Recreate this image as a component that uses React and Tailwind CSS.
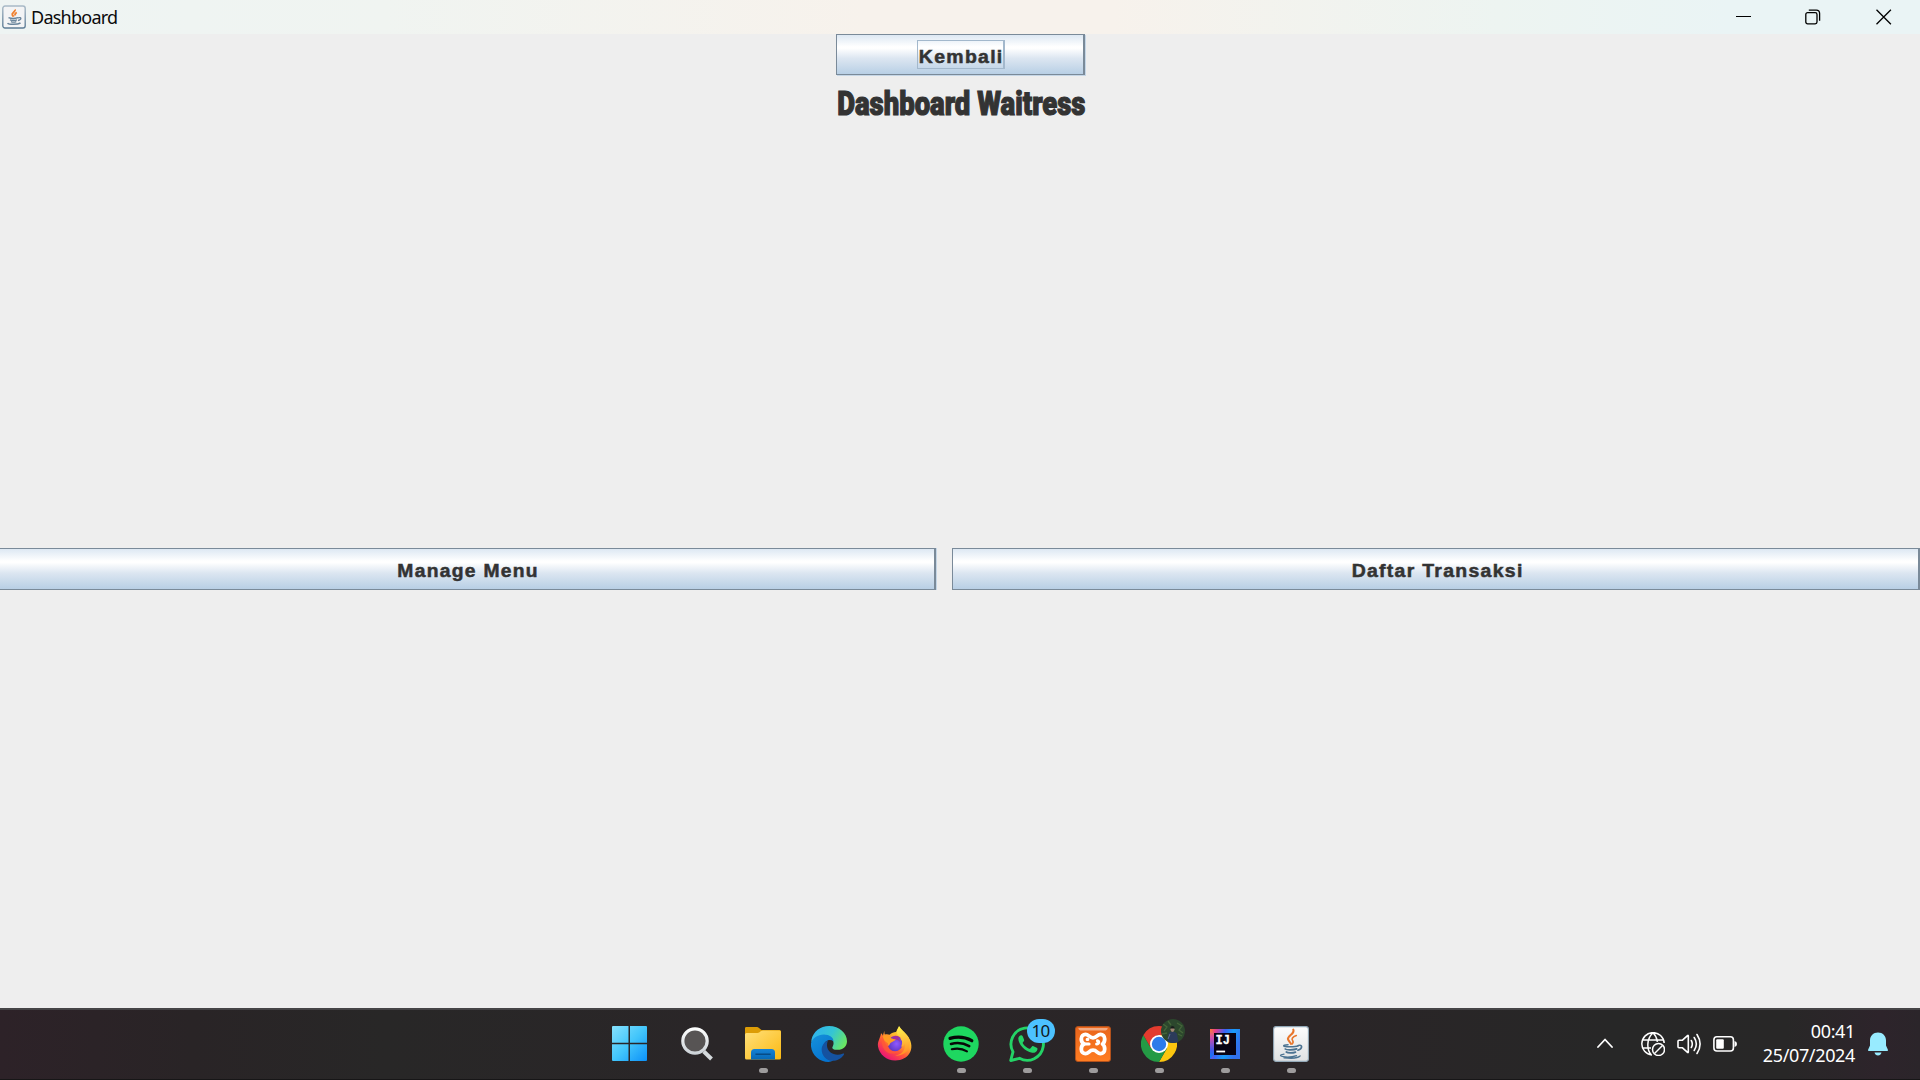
import React from "react";

function JavaIcon({ className }) {
  return (
    <svg viewBox="0 0 36 36" className={className}>
      <defs>
        <linearGradient id="javaBg" x1="0" y1="0" x2="0" y2="1">
          <stop offset="0" stopColor="#fdfdfd" />
          <stop offset="1" stopColor="#dfe1e2" />
        </linearGradient>
      </defs>
      <rect x="0.6" y="0.6" width="34.8" height="34.8" rx="2.6" fill="url(#javaBg)" stroke="#93a9b8" strokeWidth="1.1" />
      <g fill="none" stroke="#e8762c" strokeLinecap="round">
        <path d="M20.3 3.6c2 4.2-6.300 6.200-5.300 9.700.4 1.700 2.300 2.900 3 4.500" strokeWidth="2.1" />
        <path d="M23.300 9.500c-4 1.500-5 3.300-3.700 5 .9 1.300.5 2.500-.4 3.400" strokeWidth="1.6" />
      </g>
      <g fill="none" stroke="#4c7391" strokeLinecap="round">
        <path d="M15 18.800c-3.200.1-4.600.7-4.200 1.200.9 1.100 11.500 1 14.400-.3" strokeWidth="1.500" />
        <path d="M12.200 23c1.200 1.200 8.800 1 11.500-.1" strokeWidth="1.700" />
        <path d="M13.300 26c1.500 1.300 6.800 1.100 9.200.1" strokeWidth="1.700" />
        <path d="M25.300 19.500c4.200-1.300 4.800 2.800-.4 4.700" strokeWidth="1.600" />
        <path d="M11 28.200c-10 1.700 3.500 4.500 12.500 1.400M11 31.800c7.500.9 14.500 0 16.200-1.900" strokeWidth="1.300" />
      </g>
    </svg>
  );
}

function JavaSmallIcon() {
  return (
    <svg viewBox="0 0 24 24" className="h-6 w-6">
      <defs>
        <linearGradient id="javaSmBorder" x1="0" y1="0" x2="0" y2="1">
          <stop offset="0" stopColor="#a9bac7" />
          <stop offset="1" stopColor="#5d7c95" />
        </linearGradient>
      </defs>
      <rect x="0.8" y="1" width="22.400" height="22" rx="2.200" fill="#f3f4f5" stroke="url(#javaSmBorder)" strokeWidth="1.400" />
      <path d="M13 4.500c1 2.200-3.800 3.200-2.700 5.300.4.800 1 1 1.200 2M14.800 7.500c-2.500 1.200-1.800 2-1.500 3" fill="none" stroke="#ef8030" strokeWidth="1.900" />
      <path d="M6.500 12.700c2.500.9 7 .8 9.500 0M8 14.800c2 .7 5.200.7 7 0M9 16.600c1.500.7 3.700.7 5.300 0M16 12.800c4-1 3.600 2 0 2.700" fill="none" stroke="#68849b" strokeWidth="1.300" />
      <path d="M5.500 18.200c1.500 1.500 10 1.500 13-.2" fill="none" stroke="#68849b" strokeWidth="1.600" />
    </svg>
  );
}

function WindowsIcon() {
  return (
    <svg viewBox="0 0 36 36" className="relative -left-px h-9 w-9">
      <defs>
        <linearGradient id="win" gradientUnits="userSpaceOnUse" x1="0" y1="0" x2="35" y2="35">
          <stop offset="0" stopColor="#86e2fd" />
          <stop offset="0.5" stopColor="#43c6fb" />
          <stop offset="1" stopColor="#0c91f8" />
        </linearGradient>
      </defs>
      <g fill="url(#win)">
        <path d="M1 0h15.500v16.800H0V1Q0 0 1 0Z" />
        <path d="M18 0h16q1 0 1 1v15.800H18Z" />
        <path d="M0 18.300h16.500V35H1q-1 0-1-1Z" />
        <path d="M18 18.300h17V34q0 1-1 1H18Z" />
      </g>
    </svg>
  );
}

function SearchIcon() {
  return (
    <svg viewBox="0 0 36 36" className="h-9 w-9">
      <defs>
        <linearGradient id="lens" x1="0" y1="0" x2="0" y2="1">
          <stop offset="0" stopColor="#fdfefe" />
          <stop offset="1" stopColor="#cdd3d8" />
        </linearGradient>
      </defs>
      <path d="m24.800 25.500 7.700 7.500" stroke="#d5dadd" strokeWidth="4" strokeLinecap="butt" />
      <circle cx="16" cy="15" r="12.200" fill="#575454" stroke="url(#lens)" strokeWidth="3.200" />
    </svg>
  );
}

function FolderIcon() {
  return (
    <svg viewBox="0 0 36 36" className="h-9 w-9">
      <defs>
        <linearGradient id="folder" x1="0" y1="0" x2="1" y2="1">
          <stop offset="0" stopColor="#ffe07b" />
          <stop offset="1" stopColor="#fbb912" />
        </linearGradient>
        <linearGradient id="folderBlue" x1="0" y1="0" x2="0" y2="1">
          <stop offset="0" stopColor="#1482d6" />
          <stop offset="1" stopColor="#0768b4" />
        </linearGradient>
      </defs>
      <path d="M0 2.300Q0 1 1.300 1H12q1 0 2 .9L16.500 4H34.500Q36 4 36 5.500V10H0Z" fill="#dc9c06" />
      <path d="M0 8.500Q0 7 1.500 7H12.500q1 0 2-.8l1.500-1.100q.8-.6 2-.6H34.500Q36 4.500 36 6V32q0 1.500-1.500 1.500h-33Q0 33.500 0 32Z" fill="url(#folder)" />
      <path d="M6 26.500Q6 23 9.500 23h17Q30 23 30 26.500v7H6Z" fill="url(#folderBlue)" />
      <path d="M11 28.200h14" stroke="#064b85" strokeWidth="1.500" strokeLinecap="round" />
    </svg>
  );
}

function EdgeIcon() {
  return (
    <svg viewBox="0 0 24 24" className="h-9 w-9">
      <defs>
        <linearGradient id="edgeTop" x1="0" y1="0.300" x2="1" y2="0.700">
          <stop offset="0" stopColor="#2fb2ee" />
          <stop offset="0.500" stopColor="#35c5d3" />
          <stop offset="1" stopColor="#6de95d" />
        </linearGradient>
        <linearGradient id="edgeLeft" x1="0" y1="0" x2="0.600" y2="1">
          <stop offset="0" stopColor="#1691d9" />
          <stop offset="1" stopColor="#0573d0" />
        </linearGradient>
      </defs>
      <path d="M.3 9.200C1.500 3.700 6.200 0 12 0c7 0 12 4.900 12 10.200 0 3.400-2.700 5.700-6.200 5.700-2.700 0-4.200-.8-3.400-2.100 1.900-3-.3-6.600-4.900-6.600-4 0-7.200 1.700-9.200 3.800Z" fill="url(#edgeTop)" />
      <path d="M0 11.500C.8 8 4.500 5.600 8.600 5.600c3.800 0 6.400 2 6.400 4.500-2.600-2-6.300-.3-6.800 3.800-.5 4.300 2.800 7.700 6.700 9C13.800 23.800 12.500 24 11.700 24 5.200 24-.6 18.500 0 11.500Z" fill="url(#edgeLeft)" />
      <path d="M11.300 9.700c-4.800 2.200-5.300 7.500-2.400 10.900 3.500 4.200 9.900 3.100 12.900-1.300.6-.9.200-1.300-.8-.8-5.300 2.300-12.600-1.700-9.700-8.800Z" fill="#1552a0" />
    </svg>
  );
}

function FirefoxIcon() {
  return (
    <svg viewBox="0 0 36 36" className="h-9 w-9">
      <defs>
        <linearGradient id="ffBody" x1="0.900" y1="0.100" x2="0.300" y2="1">
          <stop offset="0" stopColor="#fff24b" />
          <stop offset="0.350" stopColor="#ffb52b" />
          <stop offset="0.650" stopColor="#ff5639" />
          <stop offset="1" stopColor="#e8117a" />
        </linearGradient>
        <radialGradient id="ffGlobe" cx="0.600" cy="0.500" r="0.600">
          <stop offset="0" stopColor="#9059ff" />
          <stop offset="1" stopColor="#5a35bd" />
        </radialGradient>
        <linearGradient id="ffTail" x1="0.300" y1="0" x2="0.400" y2="1">
          <stop offset="0" stopColor="#fff44f" />
          <stop offset="1" stopColor="#ff8b24" />
        </linearGradient>
      </defs>
      <path d="M7.300 5c.2 1.500 0 2.500.6 3.500 1.800-.5 3.500-.2 4.700.3C14.500 7 16.800 6 19 6L22 0c1.800 3 5 5.600 7.500 8.500 4.600 5.200 6.300 12 3.700 17.500-2.700 5.600-8.400 8.500-15 8.500C9.500 34.500 2.400 28.500 1 20.500.3 15.200 3.500 12 4 7.300c1 .6 1.500 1.500 1.800 2.500Z" fill="url(#ffBody)" />
      <circle cx="18" cy="17.800" r="7.500" fill="url(#ffGlobe)" />
      <path d="M22.500.5c-3 3-3.500 7-.6 9.600 3.300 2.800 4.300 7.500 2 10.700 2.200-.4 3.600-2 4-3.500 1.500 6.800-4.300 12.300-10 12.300 10 1.200 17-7.500 14.500-16.100-1.500-5.500-7.900-7.500-9.900-13Z" fill="url(#ffTail)" />
      <path d="M7.900 9c3 0 5 .6 6.300 3.200 1.400.7 3.300.4 4.800.8-.5 1.900-3.500 2.500-5.300 3.800-1 .8-.5 2.200-2.700 3.200C7.500 18 7 13.500 5.500 10.500Z" fill="#ff9b22" />
      <path d="M5.500 9.500c1 4.300 1.900 5.500 5.500 8-.5 6.500 6 10 11 7.200-2.500 3.600-10.600 4.500-14.500-1C4.700 19.800 3.900 14 5.500 9.500Z" fill="#ff5b35" fillOpacity="0.750" />
      <path d="M15 11.200c3-2.700 6.800-1.700 9.300 1.300-1.300-.4-2.300-.3-3-.1 1 .9 1.700 2.200 1.800 3.500-1.600-2.200-4.700-2.900-7-3Z" fill="#a32fa0" />
    </svg>
  );
}

function SpotifyIcon() {
  return (
    <svg viewBox="0 0 36 36" className="h-9 w-9">
      <circle cx="18" cy="18" r="17.700" fill="#1ed760" />
      <g fill="none" stroke="#080808" strokeLinecap="round">
        <path d="M7 12.400c7.300-2 15.500-1.200 21.800 2.300" strokeWidth="3.200" />
        <path d="M8 18c6.100-1.700 12.800-.9 18.200 2.200" strokeWidth="2.600" />
        <path d="M8.800 23.300c5.200-1.300 10.800-.6 15.200 2" strokeWidth="2.100" />
      </g>
    </svg>
  );
}

function WhatsAppIcon() {
  return (
    <div className="relative h-9 w-9">
      <svg viewBox="0 0 36 36" className="h-9 w-9">
        <path d="M1.700 34.500 4 25.900A16.200 16.200 0 1 1 10.400 32.300Z" fill="#2a2628" stroke="#24d366" strokeWidth="2.900" strokeLinejoin="round" />
        <path d="M9.300 12.500c.1-1.600 1.700-3.500 3.200-3.200.7.100 1 .6 1.300 1.300l1.200 3c.4 1-.1 1.500-.6 2.200-.7.800-.9 1.100-.5 1.700 1.500 2.400 3.600 4.200 6.200 5.200.6.200 1 .1 1.400-.4l1.500-1.800c.4-.5.9-.6 1.500-.3l3.200 1.500c.8.4.9.8.7 1.700-.5 2.300-3 3.700-5.200 3.300C15.600 25.300 9.400 18.500 9.300 12.500Z" fill="#24d366" />
      </svg>
      <div className="absolute -top-[7px] left-[18px] flex h-6 w-7 items-center justify-center rounded-full bg-[#4cc2ff] pb-px pr-px text-[17px] leading-none tracking-[-0.8px] text-[#101820]">
        10
      </div>
    </div>
  );
}

function XamppIcon() {
  return (
    <svg viewBox="0 0 36 36" className="h-9 w-9">
      <defs>
        <linearGradient id="xampp" x1="0" y1="0" x2="0" y2="1">
          <stop offset="0" stopColor="#e9651c" />
          <stop offset="1" stopColor="#ff7d22" />
        </linearGradient>
      </defs>
      <rect x="0.500" y="0.500" width="35" height="35" rx="2.500" fill="url(#xampp)" stroke="#b2511c" />
      <path d="M4 2h28c1.500 0 .2 2.500-2 2.500H6C4 4.500 2.500 2 4 2Z" fill="#fff" fillOpacity="0.450" />
      <path d="M9 18c-2-1-2.700-3-2.700-5C6.300 10 8.200 8.300 10.500 8.300c3.300 0 3.500 3.500 7.500 3.500s4.200-3.500 7.500-3.500c2.300 0 4.200 1.700 4.200 4.700 0 2-.7 4-2.200 5 1.500 1 2.200 3 2.200 5 0 3-1.900 4.700-4.200 4.700-3.300 0-3.500-3.500-7.500-3.500s-4.200 3.500-7.500 3.500c-2.300 0-4.200-1.700-4.200-4.700 0-2 .7-4 2.700-5Z" fill="none" stroke="#fff" strokeWidth="3.800" strokeLinejoin="round" />
      <path d="M9 18h5M12.200 13.400h.6M22.500 14.800c1.600.2 1.600 3-.8 3.200" fill="none" stroke="#fff" strokeWidth="3.200" strokeLinecap="round" />
    </svg>
  );
}

function ChromeIcon() {
  return (
    <div className="relative h-9 w-9">
      <svg viewBox="0 0 36 36" className="h-9 w-9">
        <path d="M18 18V9H33.600A18 18 0 0 1 18 36l7.800-13.500Z" fill="#fcc60f" />
        <path d="M18 18l7.800 4.500L18 36A18 18 0 0 1 2.400 9l7.800 13.500Z" fill="#249a45" />
        <path d="M2.400 9A18 18 0 0 1 18 0a18 18 0 0 1 15.600 9H18Q12 9 10.200 22.500Z" fill="#e33b2e" />
        <circle cx="18" cy="18" r="9" fill="#fff" />
        <circle cx="18" cy="18" r="7.200" fill="#2d7bea" />
      </svg>
      <svg viewBox="0 0 24 24" className="absolute -top-[7px] left-5 h-6 w-6">
        <defs>
          <clipPath id="avatar">
            <circle cx="12" cy="12" r="12" />
          </clipPath>
        </defs>
        <g clipPath="url(#avatar)">
          <path d="M0 0h24v24H0Z" fill="#2c472d" />
          <path d="M2 5l4 3-3 4M16 4l5 3-3 4 4 3M7 2l3 4M17 15l4 2M1 15l5-1" stroke="#446539" strokeWidth="1.300" fill="none" />
          <path d="M6.500 24l1-9q.5-2.500 4-2.500t4.500 2.500l1.500 9Z" fill="#2b3b5a" />
          <path d="M7 20l2-5" stroke="#60728c" />
          <ellipse cx="11.500" cy="10.300" rx="2" ry="2.600" fill="#a08572" />
          <path d="M9.300 9.500q0-2.500 2.200-2.500t2.200 2.500Z" fill="#191d1b" />
        </g>
      </svg>
    </div>
  );
}

function IntelliJIcon() {
  return (
    <svg viewBox="0 0 36 36" className="h-9 w-9">
      <defs>
        <linearGradient id="ijBg" x1="0" y1="0" x2="1" y2="0.400">
          <stop offset="0" stopColor="#fc7b39" />
          <stop offset="0.180" stopColor="#e43e8e" />
          <stop offset="0.450" stopColor="#3a62f5" />
          <stop offset="0.700" stopColor="#179cf9" />
          <stop offset="1" stopColor="#3170ee" />
        </linearGradient>
        <linearGradient id="ijSide" x1="0" y1="0" x2="0" y2="1">
          <stop offset="0" stopColor="#fb7b35" />
          <stop offset="0.300" stopColor="#cf4cae" />
          <stop offset="0.700" stopColor="#4059e9" />
          <stop offset="1" stopColor="#087cfa" />
        </linearGradient>
      </defs>
      <path d="M3 3h30v30H3Z" fill="url(#ijBg)" />
      <path d="M3 3l4 4v22l-4 4Z" fill="url(#ijSide)" />
      <path d="M7 7h22v22H7Z" fill="#080314" />
      <text x="8.600" y="17.700" fill="#fff" stroke="#fff" strokeWidth="0.300" fontSize="12" fontWeight="700" fontFamily="'Liberation Mono', monospace">
        IJ
      </text>
      <path d="M9.300 25.500h8.800" stroke="#fff" strokeWidth="1.800" />
    </svg>
  );
}

const apps = [
  { name: "Start", icon: <WindowsIcon /> },
  { name: "Search", icon: <SearchIcon /> },
  { name: "File Explorer", icon: <FolderIcon />, running: true },
  { name: "Edge", icon: <EdgeIcon /> },
  { name: "Firefox", icon: <FirefoxIcon /> },
  { name: "Spotify", icon: <SpotifyIcon />, running: true },
  { name: "WhatsApp", icon: <WhatsAppIcon />, running: true },
  { name: "XAMPP", icon: <XamppIcon />, running: true },
  { name: "Chrome", icon: <ChromeIcon />, running: true },
  { name: "IntelliJ IDEA", icon: <IntelliJIcon />, running: true },
  { name: "Java", icon: <JavaIcon className="h-9 w-9" />, running: true },
];

function TitleBar() {
  return (
    <header className="flex h-[34px] shrink-0 items-center bg-[linear-gradient(90deg,#eef4f3_0%,#f0f4f1_20%,#f7f2ec_45%,#f7f2ec_58%,#edf4f1_78%,#eaf4f5_90%,#eaf4f5_100%)] pl-[2px] text-[#0b0b0b]">
      <JavaSmallIcon />
      <span className="ml-[5px] text-[18px] leading-6 tracking-[-0.75px]">Dashboard</span>
      <div className="ml-auto flex items-center">
        <svg viewBox="0 0 16 16" className="mr-[53px] h-4 w-4" fill="none" stroke="#000" strokeWidth="1">
          <path d="M0 7.500h15" />
        </svg>
        <svg viewBox="0 0 16 16" className="mr-[55px] h-4 w-4" fill="none" stroke="#000" strokeWidth="1.300">
          <rect x="0.800" y="3.600" width="11.200" height="11.200" rx="1.800" />
          <path d="M3.800 1.100h7.500a3.300 3.300 0 0 1 3.300 3.300v7.400" />
        </svg>
        <svg viewBox="0 0 16 16" className="mr-[28px] h-4 w-4" fill="none" stroke="#000" strokeWidth="1.300">
          <path d="m.5.800 14.400 14.400M14.900.800.5 15.200" />
        </svg>
      </div>
    </header>
  );
}

const buttonBase =
  "flex items-center justify-center border border-r-2 border-[#7a8a99] bg-[linear-gradient(180deg,#dde8f3_0%,#ffffff_30%,#ffffff_34%,#dce6f1_60%,#b8cfe5_100%)] font-['Liberation_Sans',Arial,sans-serif] text-[18px] font-bold leading-5 text-[#333333] [-webkit-text-stroke:0.5px_#333333]";

function TaskBar() {
  return (
    <footer className="flex h-[72px] shrink-0 items-stretch border-b border-t-2 border-b-[#171617] border-t-[#454446] bg-[linear-gradient(90deg,#2d2228_0%,#292426_10%,#282727_20%,#2a2628_38%,#2a2527_68%,#272727_84%,#282727_93%,#2d242b_98%,#2b252a_100%)] text-white">
      <nav className="ml-[598px] flex">
        {apps.map((app) => (
          <button key={app.name} className="flex w-[66px] flex-col items-center pt-[16px]">
            {app.icon}
            {app.running && <span className="mt-[6px] h-[5px] w-[9px] rounded-full bg-[#9e9c9d]" />}
          </button>
        ))}
      </nav>
      <div className="ml-auto flex items-center">
        <svg viewBox="0 0 16 10" className="mr-[28px] mt-[-4px] h-[10px] w-4" fill="none" stroke="#fff" strokeWidth="1.800" strokeLinecap="round" strokeLinejoin="round">
          <path d="m1 9 7-7.500L15 9" />
        </svg>
        <svg viewBox="0 0 24 24" className="-mt-px mr-3 h-6 w-6" fill="none" stroke="#fff" strokeWidth="1.500">
          <path d="M11 23A11.200 11.200 0 1 1 23.200 11M1.500 8h21M1.500 16H10M10 22.500C5.500 17 5.500 7 12 .8c2.700 2.600 4 6 4.400 9" />
          <circle cx="17.500" cy="17.500" r="6" />
          <path d="m13.500 21.500 8-8" />
        </svg>
        <svg viewBox="0 0 24 24" className="mr-3 mt-[-2px] h-6 w-6" fill="none" stroke="#fff" strokeWidth="1.600" strokeLinecap="round" strokeLinejoin="round">
          <path d="M1 9.200q0-1 1-1h3.500l5-4.600q.8-.6.8.4v16q0 1-.8.4l-5-4.600H2q-1 0-1-1Z" />
          <path d="M14.300 8.500q2 3.500 0 7M17.200 5.500q4.300 6.500 0 13M20 2.500q6.200 9.500 0 19" />
        </svg>
        <svg viewBox="0 0 24 24" className="mr-[24px] mt-[-2px] h-6 w-6">
          <rect x="0.900" y="4.800" width="19.500" height="14.200" rx="3" fill="none" stroke="#fff" strokeWidth="1.600" />
          <rect x="3.200" y="7.200" width="7.600" height="9.500" rx="1" fill="#fff" />
          <path d="M21.500 9q2.500.3 2.500 3t-2.500 3Z" fill="#fff" />
        </svg>
        <div className="mt-[-4px] w-[94px] whitespace-nowrap text-right text-[18px] leading-6 tracking-[-0.35px]">
          <div>00:41</div>
          <div>25/07/2024</div>
        </div>
        <svg viewBox="0 0 20 24" className="ml-[13px] mr-8 mt-[-2px] h-6 w-5" fill="#98ebff">
          <path d="M10 .5c4.700 0 8 3.500 8 8v5l1.800 4q.5 1.500-1 1.500H1.200q-1.500 0-1-1.500L2 13.500v-5c0-4.500 3.300-8 8-8Z" />
          <path d="M6.500 20.500h7q-.8 3-3.500 3t-3.500-3Z" />
        </svg>
      </div>
    </footer>
  );
}

export default function App() {
  return (
    <div className="flex h-[1080px] w-[1920px] flex-col overflow-hidden bg-[#eeeeee] font-['Noto_Sans','Open_Sans',sans-serif]">
      <TitleBar />
      <main className="flex flex-1 flex-col">
        <div className="flex flex-col items-center">
          <button className={`${buttonBase} h-[41px] w-[249px] pl-[2px] shadow-[1px_1px_0_#c5d6e6]`}>
            <span className="flex h-[29px] w-[88px] items-center justify-center border border-r-2 border-[#a3b8cc] pl-[2px] pt-[5px] tracking-[1.2px]">
              <span className="block scale-x-[1.080]">Kembali</span>
            </span>
          </button>
          <h1 className="mt-2 flex h-[42px] items-center justify-center whitespace-nowrap pl-[3px] font-['Roboto',sans-serif] text-[33.500px] font-black leading-none text-[#333333]">
            <span className="block origin-center scale-x-[0.820] [-webkit-text-stroke:1.200px_#333333]">Dashboard Waitress</span>
          </h1>
        </div>
        <div className="mt-[423px] flex h-[42px] gap-4">
          <button className={`${buttonBase} w-[936px] border-l-0 pl-[3px] pt-1 tracking-[1.2px] shadow-[1px_0_0_#c5d6e6]`}>
            <span className="block scale-x-[1.07]">Manage Menu</span>
          </button>
          <button className={`${buttonBase} w-[968px] pl-[4px] pt-1 tracking-[1.2px]`}>
            <span className="block scale-x-[1.08]">Daftar Transaksi</span>
          </button>
        </div>
      </main>
      <TaskBar />
    </div>
  );
}
